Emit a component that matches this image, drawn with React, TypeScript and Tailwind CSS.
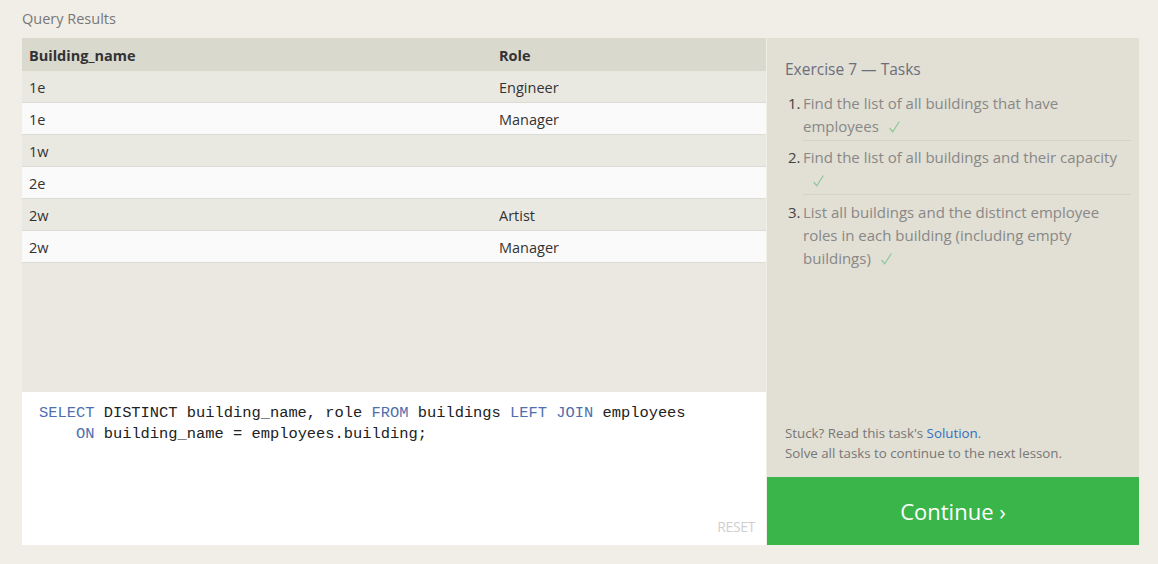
import React from "react";

const rows: [string, string][] = [
  ["1e", "Engineer"],
  ["1e", "Manager"],
  ["1w", ""],
  ["2e", ""],
  ["2w", "Artist"],
  ["2w", "Manager"],
];

function Check() {
  return (
    <svg className="inline-block ml-[10px] align-[-1px]" width="11" height="12" viewBox="0 0 11 12" fill="none">
      <path d="M1 7.5 L3.8 10.8 L10 1" stroke="#8cc79a" strokeWidth="1.2" strokeLinecap="round" strokeLinejoin="round" />
    </svg>
  );
}

export default function App() {
  return (
    <div
      className="w-[1158px] h-[564px] bg-[#f1eee7] overflow-hidden"
      style={{ fontFamily: '"Open Sans", "Noto Sans", sans-serif' }}
    >
      <div className="pl-[22px] pt-[9px] h-[38px] text-[14.5px] leading-[20px] text-[#777]">Query Results</div>
      <div className="flex ml-[22px] w-[1117px] h-[507px]">
        <div className="w-[744px] flex flex-col">
          <div className="flex-1 bg-[#eae8e0] flex flex-col">
            <div className="grid grid-cols-[470px_1fr] h-[33px] pt-[2px] bg-[#dad9ce] items-center font-bold text-[14.5px] text-[#333]">
              <div className="pl-[7px]">Building_name</div>
              <div className="pl-[7px]">Role</div>
            </div>
            {rows.map(([b, r], i) => (
              <div
                key={i}
                className={
                  "grid grid-cols-[470px_1fr] h-[32px] pt-[2px] items-center text-[14.5px] text-[#333] border-b border-[#dcdbd4] " +
                  (i % 2 === 0 ? "bg-[#eae9e1]" : "bg-[#fafafa]")
                }
              >
                <div className="pl-[7px]">{b}</div>
                <div className="pl-[7px]">{r}</div>
              </div>
            ))}
          </div>
          <div className="h-[153px] bg-white relative pt-[11px] pl-[17px]">
            <pre
              className="text-[15.4px] leading-[21px] text-[#222] m-0"
              style={{ fontFamily: '"Liberation Mono", "DejaVu Sans Mono", monospace' }}
            >
              <span className="text-[#4e6fae]">SELECT</span> DISTINCT building_name, role{" "}
              <span className="text-[#4e6fae]">FROM</span> buildings{" "}
              <span className="text-[#4e6fae]">LEFT</span>{" "}
              <span className="text-[#4e6fae]">JOIN</span> employees
              {"\n    "}
              <span className="text-[#4e6fae]">ON</span> building_name = employees.building;
            </pre>
            <div className="absolute right-[11px] bottom-[8px] text-[14px] leading-[20px] text-[#cfcfcf] tracking-tight">RESET</div>
          </div>
        </div>
        <div className="w-[372px] ml-[1px] flex flex-col">
          <div className="flex-1 bg-[#e2dfd4] flex flex-col pl-[18px] pr-[8px] pt-[20px]">
            <div className="text-[15.5px] leading-[22px] text-[#6b6f7c]">Exercise 7 — Tasks</div>
            <ol className="mt-[12px] text-[15px] leading-[23px] text-[#888]">
              <li className="flex ml-[3px]">
                <span className="w-[15px] shrink-0 text-[#444]">1.</span>
                <div className="flex-1 pb-[2px] pr-[10px] border-b border-[#d6d3c8]">
                  Find the list of all buildings that have employees
                  <Check />
                </div>
              </li>
              <li className="flex ml-[3px]">
                <span className="w-[15px] shrink-0 pt-[5px] text-[#444]">2.</span>
                <div className="flex-1 pt-[5px] pb-[2px] border-b border-[#d6d3c8]">
                  Find the list of all buildings and their capacity
                  <br />
                  <Check />
                </div>
              </li>
              <li className="flex ml-[3px]">
                <span className="w-[15px] shrink-0 pt-[6px] text-[#444]">3.</span>
                <div className="flex-1 pt-[6px] pr-[10px]">
                  List all buildings and the distinct employee roles in each building (including empty buildings)
                  <Check />
                </div>
              </li>
            </ol>
            <div className="mt-auto pb-[14px] text-[13.3px] leading-[20px] text-[#777]">
              <div>
                Stuck? Read this task's <span className="text-[#2f6fc2]">Solution</span>.
              </div>
              <div>Solve all tasks to continue to the next lesson.</div>
            </div>
          </div>
          <div className="h-[68px] bg-[#3ab54a] flex items-center justify-center text-white text-[22px]">
            Continue ›
          </div>
        </div>
      </div>
    </div>
  );
}
